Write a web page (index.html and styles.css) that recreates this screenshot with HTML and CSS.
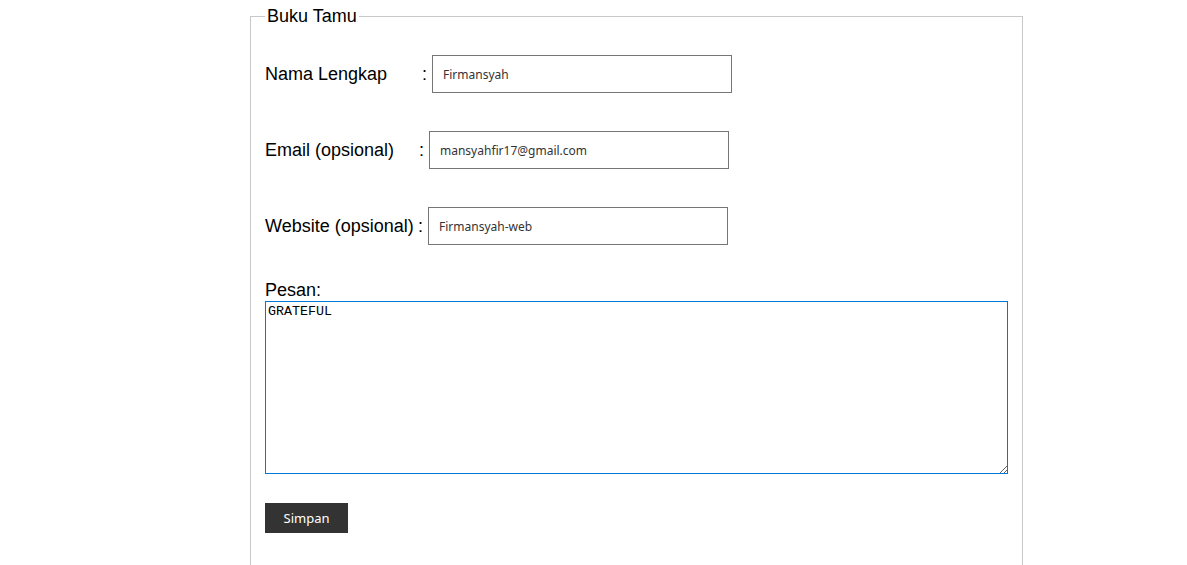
FILE: index.html
```html
<!DOCTYPE html>
<html>
<head>
<meta charset="utf-8">
<title>Buku Tamu</title>
<link rel="stylesheet" href="styles.css">
</head>
<body>
<form class="guest">
  <fieldset class="box">
    <legend class="box-title">Buku Tamu</legend>
    <div class="row">
      <span class="lbl lbl-nama">Nama Lengkap</span><span class="colon">:</span>
      <input class="field" type="text" value="Firmansyah">
    </div>
    <div class="row">
      <span class="lbl lbl-email">Email (opsional)</span><span class="colon">:</span>
      <input class="field" type="text" value="mansyahfir17@gmail.com">
    </div>
    <div class="row">
      <span class="lbl lbl-web">Website (opsional)</span><span class="colon">:</span>
      <input class="field" type="text" value="Firmansyah-web">
    </div>
    <div class="msg-label">Pesan:</div>
    <textarea class="msg">GRATEFUL</textarea>
    <button class="save" type="button">Simpan</button>
  </fieldset>
</form>
</body>
</html>
```
FILE: styles.css
```css
html, body {
  margin: 0;
  padding: 0;
  background: #fff;
}
body {
  font-family: "Liberation Sans", Arial, sans-serif;
  font-size: 18px;
  color: #000;
}
.guest {
  margin: 0;
}
.box {
  box-sizing: border-box;
  width: 772px;
  margin: 6px 0 0 250px;
  padding: 28px 14px 40px 14px;
  border: 1px solid #c8c8c8;
  min-height: 580px;
}
.box-title {
  padding: 0 2px;
  font-size: 18px;
  line-height: 21px;
}
.row {
  display: flex;
  align-items: center;
  height: 38px;
}
.row + .row {
  margin-top: 38px;
}
.lbl {
  display: inline-block;
  white-space: nowrap;
}
.lbl-nama { width: 157px; }
.lbl-email { width: 154px; }
.lbl-web { width: 153px; }
.colon {
  display: inline-block;
  width: 10px;
}
.field {
  box-sizing: border-box;
  width: 300px;
  height: 38px;
  margin: 0;
  padding: 0 10px;
  border: 1px solid #767676;
  font-family: "Noto Sans", Verdana, sans-serif;
  font-size: 12px;
  color: #333;
  background: #fff;
  outline: none;
}
.msg-label {
  margin-top: 35px;
  line-height: 21px;
}
textarea.msg {
  display: block;
  box-sizing: border-box;
  width: 743px;
  height: 173px;
  margin: 0;
  padding: 3px;
  border: none;
  box-shadow: inset 0 0 0 1px #0078d7;
  font-family: "Liberation Mono", "Courier New", monospace;
  font-size: 13.33px;
  color: #000;
  background: #fff;
  outline: none;
}
.save {
  display: block;
  margin-top: 29px;
  width: 83px;
  height: 30px;
  border: none;
  background: #333;
  color: #fff;
  font-family: "Noto Sans", Verdana, sans-serif;
  font-size: 13px;
  padding: 0;
}
```
